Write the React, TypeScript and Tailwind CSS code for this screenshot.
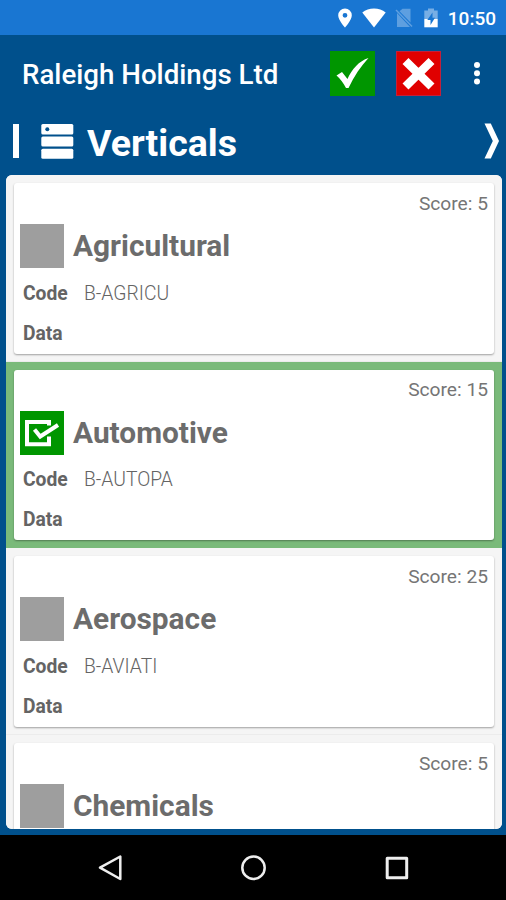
interface Vertical {
    name: string;
    score: number;
    code?: string;
    selected?: boolean;
}

const verticals: Vertical[] = [
    { name: "Agricultural", code: "B-AGRICU", score: 5 },
    { name: "Automotive", code: "B-AUTOPA", score: 15, selected: true },
    { name: "Aerospace", code: "B-AVIATI", score: 25 },
    { name: "Chemicals", score: 5 },
];

const StatusBar = () => {
    return (
        <div className="flex h-[35px] shrink-0 items-center bg-[#1976d2] pr-[10px] text-white">
            <svg className="ml-auto h-[20px] w-[14px]" viewBox="0 0 14 20" fill="currentColor">
                <path fillRule="evenodd" d="M7 0.5a6.8 6.8 0 0 0-6.8 6.8C0.200 12.200 7 19.500 7 19.500S13.800 12.200 13.800 7.300A6.800 6.800 0 0 0 7 0.500ZM7 4.900a2.400 2.400 0 1 1 0 4.800a2.400 2.400 0 0 1 0-4.800Z" />
            </svg>
            <svg className="ml-[10px] h-[20px] w-[24px]" viewBox="0 0 24 20" fill="currentColor">
                <path d="M12 19.500L0.300 4.600C3.500 2 7.600 0.600 12 0.600S20.500 2 23.700 4.600Z" />
            </svg>
            <svg className="ml-[9px] h-[20px] w-[18px]" viewBox="0 0 18 20">
                <path d="M4.500 3.300L7.500 0.700H15.500V14.500ZM2 5L15 19H2Z" fill="#5e9fe0" />
                <path d="M1 2L17 18.500" stroke="#5e9fe0" strokeWidth="1.500" />
            </svg>
            <svg className="ml-[11px] h-[20px] w-[14px]" viewBox="0 0 14 20">
                <path d="M0.300 2.500H4V0.500H10V2.500H13.700V11H0.300Z" fill="#77aee5" />
                <path d="M0.300 11H13.700V19.300H0.300Z" fill="#fff" />
                <path d="M8.500 4.500L3.300 12H6.500V17L11 9.800H8.500Z" fill="#1976d2" />
            </svg>
            <span className="ml-[10px] pt-[2px] text-[19px] leading-[35px] font-medium">10:50</span>
        </div>
    )
}

const TitleBar = () => {
    return (
        <div className="flex h-[76px] shrink-0 items-center pl-[22px] text-white">
            <h1 className="w-[308px] pt-[3px] text-[27.700px] leading-[36px] font-medium whitespace-nowrap">Raleigh Holdings Ltd</h1>
            <button className="size-[45px] shrink-0 bg-[#009600]">
                <svg className="size-full" viewBox="0 0 45 45" fill="#fff">
                    <path d="M6.500 24.500L12 21L17.500 28C22 18 29 10 38.500 7C31 15 24 25 18.500 37H16C13.500 32 10.500 28 6.500 24.500Z" />
                </svg>
            </button>
            <button className="ml-[21px] size-[45px] shrink-0 border border-[#c3203c] bg-[#e00000]">
                <svg className="size-full" viewBox="0 0 43 43" fill="none" stroke="#fff" strokeWidth="8.500">
                    <path d="M8.500 9L34.500 34.500M34.500 9L8.500 34.500" />
                </svg>
            </button>
            <svg className="ml-[32px] h-[26px] w-[8px] shrink-0" viewBox="0 0 8 26" fill="currentColor">
                <circle cx="4" cy="5" r="3" />
                <circle cx="4" cy="13.200" r="3" />
                <circle cx="4" cy="21.400" r="3" />
            </svg>
        </div>
    )
}

const SectionHeader = () => {
    return (
        <div className="flex h-[64px] shrink-0 items-center pr-[7px] pl-[13px] text-white">
            <div className="mb-[4px] h-[34px] w-[6px] bg-white" />
            <svg className="mb-[3px] ml-[22px] h-[35px] w-[33px]" viewBox="0 0 33 35">
                <rect x="0.300" y="0" width="32" height="10.500" rx="1.500" fill="#fff" />
                <rect x="0.300" y="12.500" width="32" height="10" rx="1.500" fill="#fff" />
                <rect x="0.300" y="24.800" width="32" height="10" rx="1.500" fill="#fff" />
                <circle cx="6.300" cy="5.200" r="2" fill="#00508c" />
            </svg>
            <h2 className="ml-[13px] text-[37.500px] leading-[44px] font-bold">Verticals</h2>
            <svg className="mb-[4px] ml-auto h-[36px] w-[15px]" viewBox="0 0 15 36" fill="currentColor">
                <path d="M0.500 0.500H6.800L15 18L6.800 35.500H0.500L8.800 18Z" />
            </svg>
        </div>
    )
}

const VerticalCard = ({ name, code, score, selected }: Vertical) => {
    return (
        <li className={`h-[186.660px] shrink-0 px-[8px] pt-[8px] ${selected ? "bg-[#7aba7a]" : "border-b border-[#ececec] bg-[#f5f5f5]"}`}>
            <article className="h-[170.500px] rounded-[3px] bg-white px-[6px] pt-[6.700px] text-[#646464] shadow-[0_1px_2px_rgba(0,0,0,0.35)]">
                <p className="text-right text-[19.200px] leading-[28px] text-[#757575]">Score: {score}</p>
                <div className="mt-[5.800px] flex h-[45px] items-center">
                    {selected ? (
                        <svg className="size-[44px]" viewBox="0 0 44 44" fill="none" stroke="#fff">
                            <path d="M0 0H44V44H0Z" fill="#009600" stroke="none" />
                            <path d="M29 14.500V11H7V33.200H29V25.500" strokeWidth="4" />
                            <path d="M14.500 18.500L20.200 25.500L38 14" strokeWidth="4" />
                        </svg>
                    ) : (
                        <div className="size-[44px] bg-[#9e9e9e]" />
                    )}
                    <h3 className="ml-[9px] text-[29.850px] leading-[40px] font-bold text-[#6c6c6c]">{name}</h3>
                </div>
                {code && (
                    <>
                        <div className="mt-[11.200px] flex pl-[3px] text-[19.300px] leading-[28px]">
                            <span className="w-[61px] font-bold">Code</span>
                            <span className="font-light">{code}</span>
                        </div>
                        <p className="mt-[12px] pl-[3px] text-[19.300px] leading-[28px] font-bold">Data</p>
                    </>
                )}
            </article>
        </li>
    )
}

const NavigationBar = () => {
    return (
        <div className="flex h-[65px] shrink-0 items-center justify-between bg-black pr-[96px] pl-[97px]">
            <svg className="size-[26px]" viewBox="0 0 26 26" fill="none" stroke="#eee" strokeWidth="2.500" strokeLinejoin="round">
                <path d="M23.300 1.500V24L3 12.700Z" />
            </svg>
            <svg className="size-[26px]" viewBox="0 0 26 26" fill="none" stroke="#eee" strokeWidth="2.500">
                <circle cx="12.500" cy="12.700" r="11.200" />
            </svg>
            <svg className="size-[26px]" viewBox="0 0 26 26" fill="none" stroke="#eee" strokeWidth="3" strokeLinejoin="round">
                <path d="M3.200 3.200H22.700V22.700H3.200Z" />
            </svg>
        </div>
    )
}

export default function App() {
    return (
        <main className="flex h-[900px] w-[506px] flex-col overflow-hidden bg-[#00508c] font-[Roboto,sans-serif]">
            <StatusBar />
            <TitleBar />
            <SectionHeader />
            <ul className="mr-[4px] mb-[6px] ml-[6px] flex min-h-0 flex-1 flex-col overflow-hidden rounded-[6px] bg-[#f5f5f5]">
                {verticals.map((vertical) => (
                    <VerticalCard key={vertical.name} {...vertical} />
                ))}
            </ul>
            <NavigationBar />
        </main>
    )
}
